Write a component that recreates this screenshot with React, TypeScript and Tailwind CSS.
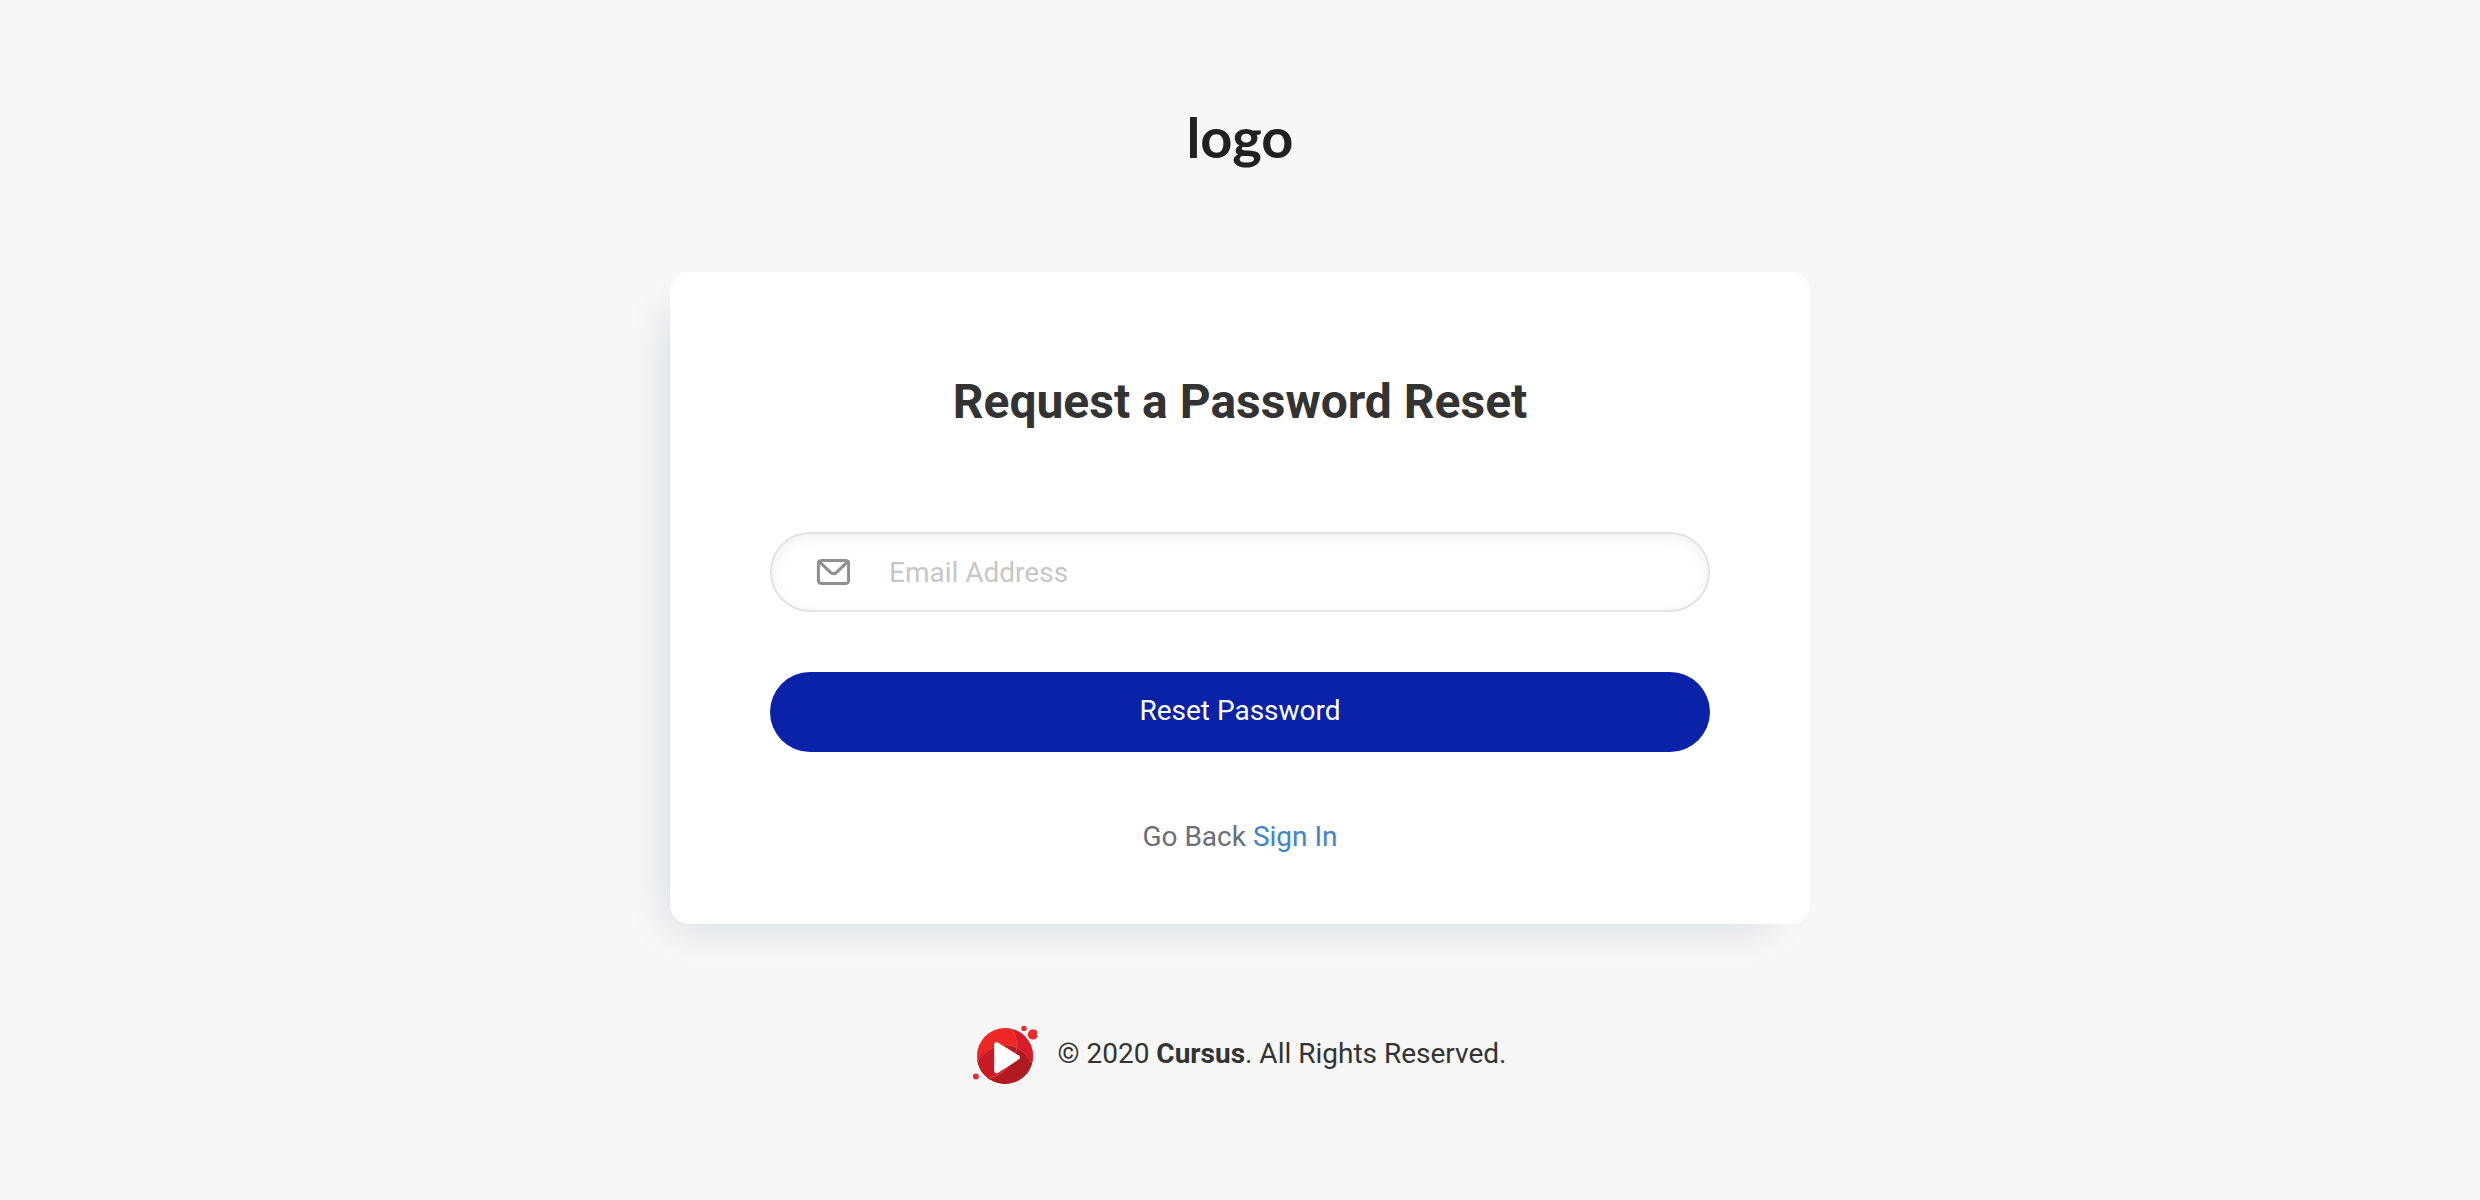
import React from "react";

function MailIcon() {
  return (
    <svg
      aria-hidden="true"
      viewBox="0 0 34 26"
      className="pointer-events-none absolute top-1/2 left-[46px] h-[26px] w-[34px] -translate-y-1/2"
      fill="none"
      stroke="#8f8f8f"
      strokeWidth="3"
      strokeLinecap="round"
      strokeLinejoin="round"
    >
      <rect x="2.4" y="1.5" width="30.2" height="23" rx="3" />
      <path d="M3 2.4 L14.8 13.6 Q17.5 16 20.2 13.6 L32 2.4" />
    </svg>
  );
}

function CursusMark() {
  return (
    <svg aria-hidden="true" viewBox="0 0 64 60" className="h-[60px] w-16 shrink-0">
      <defs>
        <clipPath id="disc">
          <circle cx="32" cy="32" r="28" />
        </clipPath>
        <clipPath id="frame">
          <rect width="64" height="60" />
        </clipPath>
      </defs>
      <g clipPath="url(#disc)">
        <rect width="64" height="60" fill="#ee2724" />
        <path d="M36 0 C43 9 46 17 43 25 L62 46 L64 0 Z" fill="#db1a2b" />
        <path d="M0 44 C6 29 20 21 33 21 C46 22 56 29 62 42 L62 62 H0 Z" fill="#ae1a20" />
        <path d="M0 44 C6 29 20 21 33 21 L42 28 C40 42 31 53 14 57 L0 60 Z" fill="#c81a22" />
        <path
          d="M36 3 C44 11 46 20 42 31 C38 43 29 51 16 54 M4 39 C9 29 20 21 33 21 C45 22 54 29 59 39"
          fill="none"
          stroke="#e0484c"
          strokeWidth="0.8"
        />
      </g>
      <path
        d="M23.6 20.5 V47 L44.4 33.4 Z"
        fill="#fff"
        stroke="#fff"
        strokeWidth="4.8"
        strokeLinejoin="round"
      />
      <g clipPath="url(#frame)" fill="#ea2a2d">
        <circle cx="51" cy="4.4" r="2.7" />
        <circle cx="60" cy="10.4" r="5.2" />
        <circle cx="2.8" cy="52.4" r="3" />
      </g>
    </svg>
  );
}

export default function App() {
  return (
    <div className="flex min-h-screen flex-col items-center bg-[#f7f7f7] px-5 pt-[101px] pb-20 font-['Roboto',sans-serif] text-[28px] leading-10 text-[#333]">
      <a
        href="#"
        className="mb-[99px] font-['Lato',sans-serif] text-[56px] leading-[72px] font-bold text-[#212121]"
      >
        logo
      </a>

      <main className="w-full max-w-[1140px] rounded-[20px] bg-white px-[100px] pt-[100px] pb-[67px] text-center shadow-[-20px_20px_40px_-20px_rgba(10,20,60,0.14)]">
        <h1 className="text-5xl leading-[60px] font-bold">Request a Password Reset</h1>
        <form className="mt-[100px]" onSubmit={(e) => e.preventDefault()}>
          <div className="relative">
            <input
              type="email"
              aria-label="Email Address"
              placeholder="Email Address"
              className="block h-20 w-full rounded-full border-2 border-[#e3e3e3] bg-white pr-10 pl-[117px] shadow-[inset_0_4px_14px_rgba(0,0,0,0.06)] outline-none placeholder:text-[#c7c7c7]"
            />
            <MailIcon />
          </div>
          <button
            type="submit"
            className="mt-[60px] block h-20 w-full rounded-full bg-[#0a22a8] pb-0.5 text-white"
          >
            Reset Password
          </button>
        </form>
        <p className="mt-[65px] text-[#686f7a]">
          Go Back{" "}
          <a href="#" className="text-[#4283ca]">
            Sign In
          </a>
        </p>
      </main>

      <footer className="mt-[100px] flex items-center gap-5">
        <CursusMark />
        <p>
          © 2020 <strong className="font-bold">Cursus</strong>. All Rights Reserved.
        </p>
      </footer>
    </div>
  );
}
